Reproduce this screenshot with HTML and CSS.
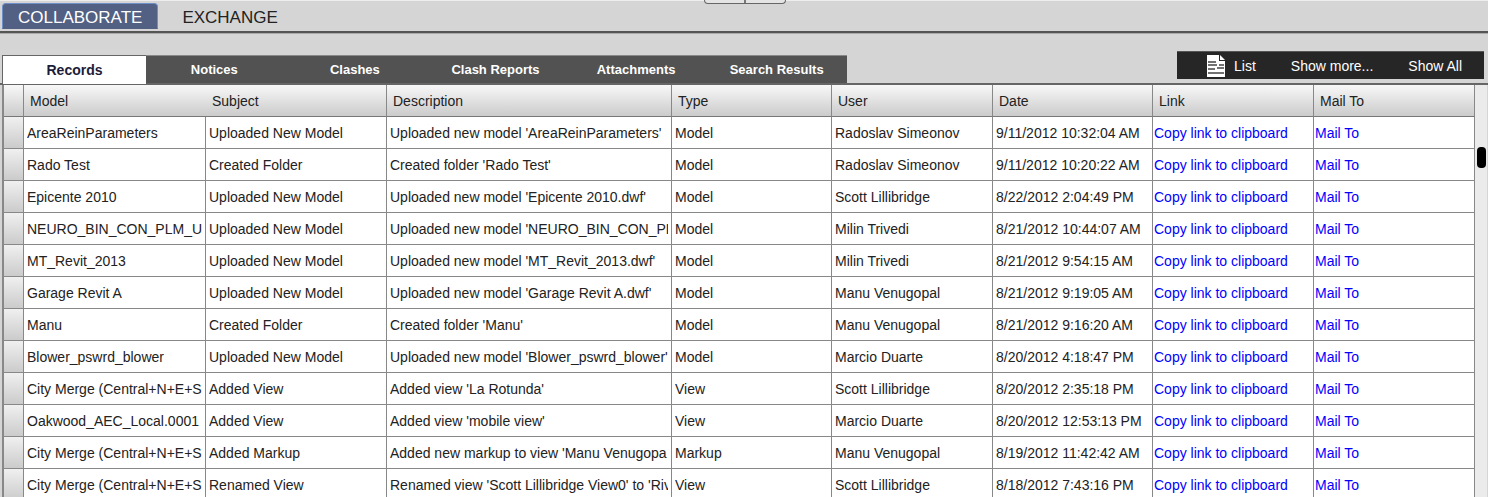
FILE: index.html
```html
<!DOCTYPE html>
<html lang="en">
<head>
    <meta charset="UTF-8">
    <meta name="viewport" content="width=device-width, initial-scale=1.0">
    <title>Collaborate - Records</title>
    <link rel="stylesheet" href="styles.css">
</head>
<body>

<!-- Main navigation -->
<header class="top-bar">
    <nav class="main-nav">
        <a href="#" class="active">COLLABORATE</a>
        <a href="#">EXCHANGE</a>
    </nav>
    <div class="splitter"><span></span><span></span></div>
</header>

<!-- Record tabs and list actions -->
<div class="sub-bar">
    <div class="tabs">
        <button class="active">Records</button>
        <button>Notices</button>
        <button>Clashes</button>
        <button>Clash Reports</button>
        <button>Attachments</button>
        <button>Search Results</button>
    </div>
    <div class="toolbar">
        <button>
            <svg width="18" height="22" viewBox="0 0 18 22">
                <path d="M0 0h12v6h6v16H0z" fill="#fff"/>
                <path d="M13 0l5 5h-5z" fill="#fff"/>
                <path d="M1 7h8M1 10h9M12 10h5M1 14h7M10 13h7M1 18h16" stroke="#444" stroke-width="1.500"/>
            </svg>
            List
        </button>
        <button>Show more...</button>
        <button>Show All</button>
    </div>
</div>

<!-- Records list -->
<main class="grid">
    <table>
        <colgroup>
            <col class="col-select">
            <col class="col-model">
            <col class="col-subject">
            <col class="col-description">
            <col class="col-type">
            <col class="col-user">
            <col class="col-date">
            <col class="col-link">
            <col>
        </colgroup>
        <thead>
            <tr>
                <th></th>
                <th class="no-line">Model</th>
                <th>Subject</th>
                <th>Description</th>
                <th>Type</th>
                <th>User</th>
                <th>Date</th>
                <th>Link</th>
                <th>Mail To</th>
            </tr>
        </thead>
        <tbody>
            <tr>
                <td class="select"></td>
                <td>AreaReinParameters</td>
                <td>Uploaded New Model</td>
                <td>Uploaded new model 'AreaReinParameters'</td>
                <td>Model</td>
                <td>Radoslav Simeonov</td>
                <td>9/11/2012 10:32:04 AM</td>
                <td class="link"><a href="#">Copy link to clipboard</a></td>
                <td class="link"><a href="#">Mail To</a></td>
            </tr>
            <tr>
                <td class="select"></td>
                <td>Rado Test</td>
                <td>Created Folder</td>
                <td>Created folder 'Rado Test'</td>
                <td>Model</td>
                <td>Radoslav Simeonov</td>
                <td>9/11/2012 10:20:22 AM</td>
                <td class="link"><a href="#">Copy link to clipboard</a></td>
                <td class="link"><a href="#">Mail To</a></td>
            </tr>
            <tr>
                <td class="select"></td>
                <td>Epicente 2010</td>
                <td>Uploaded New Model</td>
                <td>Uploaded new model 'Epicente 2010.dwf'</td>
                <td>Model</td>
                <td>Scott Lillibridge</td>
                <td>8/22/2012 2:04:49 PM</td>
                <td class="link"><a href="#">Copy link to clipboard</a></td>
                <td class="link"><a href="#">Mail To</a></td>
            </tr>
            <tr>
                <td class="select"></td>
                <td>NEURO_BIN_CON_PLM_U</td>
                <td>Uploaded New Model</td>
                <td>Uploaded new model 'NEURO_BIN_CON_PL</td>
                <td>Model</td>
                <td>Milin Trivedi</td>
                <td>8/21/2012 10:44:07 AM</td>
                <td class="link"><a href="#">Copy link to clipboard</a></td>
                <td class="link"><a href="#">Mail To</a></td>
            </tr>
            <tr>
                <td class="select"></td>
                <td>MT_Revit_2013</td>
                <td>Uploaded New Model</td>
                <td>Uploaded new model 'MT_Revit_2013.dwf'</td>
                <td>Model</td>
                <td>Milin Trivedi</td>
                <td>8/21/2012 9:54:15 AM</td>
                <td class="link"><a href="#">Copy link to clipboard</a></td>
                <td class="link"><a href="#">Mail To</a></td>
            </tr>
            <tr>
                <td class="select"></td>
                <td>Garage Revit A</td>
                <td>Uploaded New Model</td>
                <td>Uploaded new model 'Garage Revit A.dwf'</td>
                <td>Model</td>
                <td>Manu Venugopal</td>
                <td>8/21/2012 9:19:05 AM</td>
                <td class="link"><a href="#">Copy link to clipboard</a></td>
                <td class="link"><a href="#">Mail To</a></td>
            </tr>
            <tr>
                <td class="select"></td>
                <td>Manu</td>
                <td>Created Folder</td>
                <td>Created folder 'Manu'</td>
                <td>Model</td>
                <td>Manu Venugopal</td>
                <td>8/21/2012 9:16:20 AM</td>
                <td class="link"><a href="#">Copy link to clipboard</a></td>
                <td class="link"><a href="#">Mail To</a></td>
            </tr>
            <tr>
                <td class="select"></td>
                <td>Blower_pswrd_blower</td>
                <td>Uploaded New Model</td>
                <td>Uploaded new model 'Blower_pswrd_blower'</td>
                <td>Model</td>
                <td>Marcio Duarte</td>
                <td>8/20/2012 4:18:47 PM</td>
                <td class="link"><a href="#">Copy link to clipboard</a></td>
                <td class="link"><a href="#">Mail To</a></td>
            </tr>
            <tr>
                <td class="select"></td>
                <td>City Merge (Central+N+E+S</td>
                <td>Added View</td>
                <td>Added view 'La Rotunda'</td>
                <td>View</td>
                <td>Scott Lillibridge</td>
                <td>8/20/2012 2:35:18 PM</td>
                <td class="link"><a href="#">Copy link to clipboard</a></td>
                <td class="link"><a href="#">Mail To</a></td>
            </tr>
            <tr>
                <td class="select"></td>
                <td>Oakwood_AEC_Local.0001</td>
                <td>Added View</td>
                <td>Added view 'mobile view'</td>
                <td>View</td>
                <td>Marcio Duarte</td>
                <td>8/20/2012 12:53:13 PM</td>
                <td class="link"><a href="#">Copy link to clipboard</a></td>
                <td class="link"><a href="#">Mail To</a></td>
            </tr>
            <tr>
                <td class="select"></td>
                <td>City Merge (Central+N+E+S</td>
                <td>Added Markup</td>
                <td>Added new markup to view 'Manu Venugopa</td>
                <td>Markup</td>
                <td>Manu Venugopal</td>
                <td>8/19/2012 11:42:42 AM</td>
                <td class="link"><a href="#">Copy link to clipboard</a></td>
                <td class="link"><a href="#">Mail To</a></td>
            </tr>
            <tr>
                <td class="select"></td>
                <td>City Merge (Central+N+E+S</td>
                <td>Renamed View</td>
                <td>Renamed view 'Scott Lillibridge View0' to 'Riv</td>
                <td>View</td>
                <td>Scott Lillibridge</td>
                <td>8/18/2012 7:43:16 PM</td>
                <td class="link"><a href="#">Copy link to clipboard</a></td>
                <td class="link"><a href="#">Mail To</a></td>
            </tr>
        </tbody>
    </table>
    <div class="scrollbar"><div class="thumb"></div></div>
</main>

</body>
</html>
```
FILE: styles.css
```css
* {
    margin: 0;
    padding: 0;
    box-sizing: border-box;
}

body {
    font-family: 'Liberation Sans', Arial, sans-serif;
    font-size: 14px;
    color: #222;
    background-color: #d5d5d5;
    height: 100vh;
    overflow: hidden;
    display: flex;
    flex-direction: column;
}

button {
    font: inherit;
    border: none;
    cursor: pointer;
}

a {
    text-decoration: none;
}

/* Top bar */
.top-bar {
    position: relative;
    flex: none;
    height: 33px;
    padding: 2px 2px 0;
    border-top: 1px solid #eee;
    border-bottom: 2px solid #555;
    background-color: #d5d5d5;
    box-shadow: 0 1px 0 #aaa;
}

.main-nav {
    display: flex;
    gap: 8px;
}

.main-nav a {
    height: 26px;
    padding: 0 16px;
    font-size: 17px;
    line-height: 30px;
    color: #222;
}

.main-nav .active {
    color: #fff;
    background-color: #526083;
    border: 1px solid #6f8fc8;
    border-bottom-color: #526083;
    border-radius: 4px 4px 0 0;
    padding: 0 15px;
    line-height: 28px;
}

.splitter {
    position: absolute;
    top: -1px;
    left: 50%;
    display: flex;
    width: 82px;
    height: 4px;
    margin-left: -40px;
    border: 1px solid #666;
    border-top: none;
    border-radius: 0 0 4px 4px;
    background-color: #e4e4e4;
}

.splitter span {
    flex: 1;
}

.splitter span + span {
    border-left: 2px solid #777;
}

/* Tabs and toolbar */
.sub-bar {
    display: flex;
    flex: none;
    justify-content: space-between;
    align-items: flex-end;
    height: 52px;
    padding: 0 4px 0 2px;
    border-bottom: 2px solid #666;
}

.tabs {
    display: flex;
    width: 845px;
    height: 28px;
    background-color: #525252;
    border-top: 1px solid #888;
}

.tabs button {
    flex: 1;
    font-size: 13px;
    font-weight: bold;
    color: #fff;
    background-color: #525252;
}

.tabs .active {
    position: relative;
    flex: none;
    width: 144px;
    margin: -1px -2px -1px 0;
    font-size: 14px;
    color: #1c1c38;
    background-color: #fff;
    border-top: 1px solid #666;
    border-left: 1px solid #666;
}

.toolbar {
    display: flex;
    align-items: center;
    gap: 35px;
    height: 28px;
    margin-bottom: 4px;
    padding: 0 22px 0 30px;
    background-color: #262626;
    border-top: 1px solid #555;
}

.toolbar button {
    display: flex;
    align-items: center;
    gap: 9px;
    color: #fff;
    background-color: transparent;
}

/* Records grid */
.grid {
    display: flex;
    flex: 1;
    min-height: 0;
    overflow: hidden;
    margin-right: 1px;
    padding-left: 2px;
}

table {
    flex: 1;
    align-self: flex-start;
    width: 100%;
    table-layout: fixed;
    border-spacing: 0;
    border-left: 2px solid #888;
    background-color: #fff;
}

.col-select {
    width: 20px;
}

.col-model {
    width: 182px;
}

.col-subject {
    width: 181px;
}

.col-description {
    width: 285px;
}

.col-user {
    width: 161px;
}

.col-type,
.col-date {
    width: 160px;
}

.col-link {
    width: 161px;
}

th, td {
    height: 32px;
    padding: 0 3px;
    border-right: 1px solid #888;
    border-bottom: 1px solid #888;
    text-align: left;
    white-space: nowrap;
    overflow: clip;
    overflow-clip-margin: content-box;
}

th {
    padding: 0 6px;
    font-weight: normal;
    background: linear-gradient(#f8f8f8, #cbcbcb);
    border-bottom-color: #777;
}

.no-line {
    border-right: none;
}

.select {
    background: linear-gradient(#f0f0f0, #cbcbcb);
}

.link {
    padding: 0 1px;
}

.link a {
    color: #0000ff;
}

.scrollbar {
    flex: none;
    width: 12px;
    padding: 62px 1px 0 2px;
    background-color: #ebebeb;
}

.thumb {
    height: 21px;
    border-radius: 4px;
    background-color: #000;
}
```
